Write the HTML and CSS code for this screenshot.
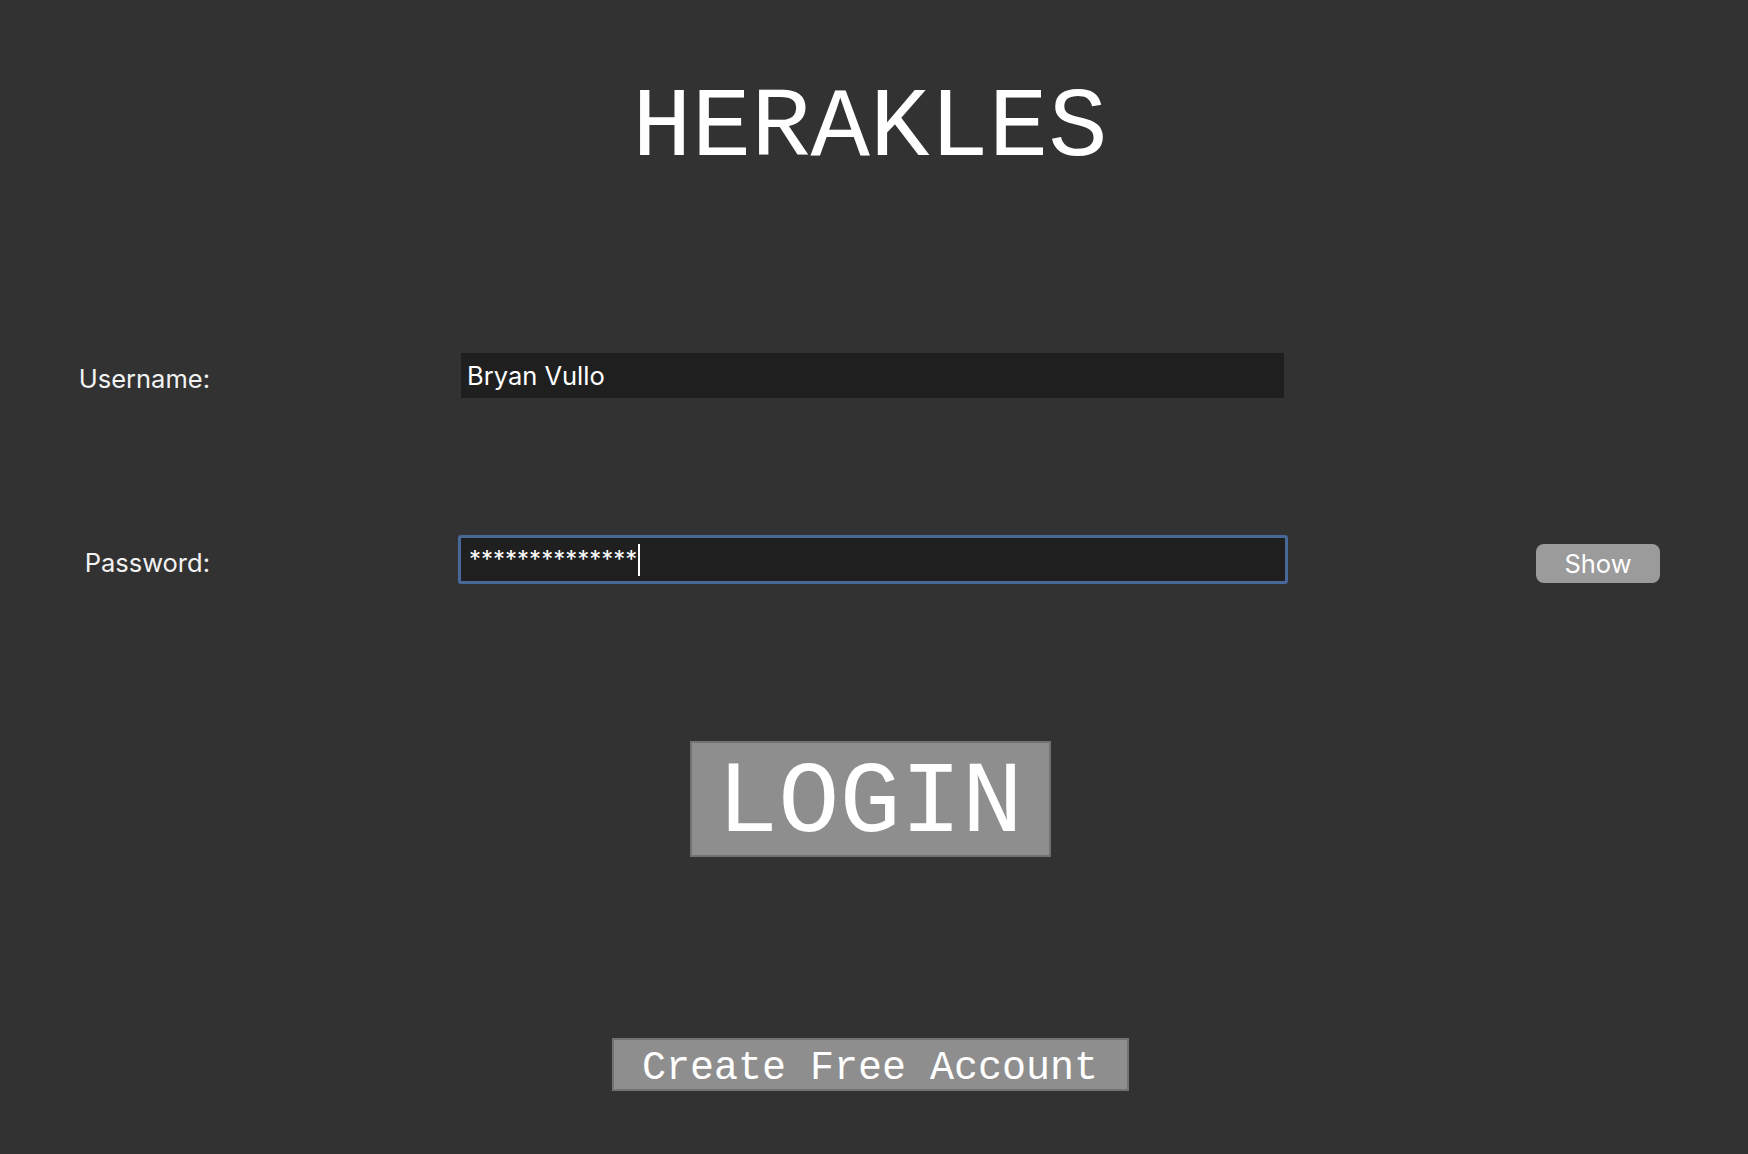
FILE: index.html
```html
<!DOCTYPE html>
<html>
<head>
<meta charset="utf-8">
<title>Herakles</title>
<link rel="stylesheet" href="styles.css">
</head>
<body>
<main class="page">
  <h1 class="title">HERAKLES</h1>
  <div class="form">
    <div class="row row-user">
      <label class="label">Username:</label>
      <div class="field">Bryan Vullo</div>
      <div class="aside"></div>
    </div>
    <div class="row row-pass">
      <label class="label">Password:</label>
      <div class="field field-focus"><span>**************</span><span class="caret"></span></div>
      <div class="aside"><button class="show">Show</button></div>
    </div>
  </div>
  <button class="login">LOGIN</button>
  <button class="create">Create Free Account</button>
</main>
</body>
</html>
```
FILE: styles.css
```css
html, body {
  margin: 0;
  padding: 0;
  background: #323232;
}
.page {
  width: 1748px;
  height: 1154px;
  display: flex;
  flex-direction: column;
  align-items: center;
  box-sizing: border-box;
  padding-top: 79px;
  padding-right: 8px;
}
.title {
  margin: 0;
  font-family: "Liberation Mono", monospace;
  font-weight: normal;
  font-size: 99px;
  line-height: 100px;
  color: #ffffff;
}
.form {
  width: 100%;
  margin-top: 174px;
  display: flex;
  flex-direction: column;
  gap: 137px;
}
.row {
  display: grid;
  grid-template-columns: 458px 830px 1fr;
  align-items: center;
}
.label {
  font-family: "Inter", "Noto Sans", sans-serif;
  font-size: 25.5px;
  color: #f2f2f2;
  justify-self: end;
  margin-right: 248px;
  margin-top: 6px;
}
.field {
  height: 45px;
  margin: 0 4px 0 3px;
  background: #1f1f1f;
  box-sizing: border-box;
  padding-left: 6px;
  display: flex;
  align-items: center;
  font-family: "Inter", "Noto Sans", sans-serif;
  font-size: 25.5px;
  color: #ffffff;
}
.field-focus {
  margin: 0;
  height: 49px;
  border: 3px solid #48689a;
  border-radius: 3px;
  padding-left: 8px;
  font-size: 24px;
}
.caret {
  display: inline-block;
  width: 2px;
  height: 32px;
  background: #ffffff;
  margin-left: 1px;
}
.aside {
  display: flex;
  justify-content: flex-end;
  padding-right: 80px;
}
.show {
  width: 124px;
  height: 39px;
  margin-top: 7px;
  border: none;
  border-radius: 8px;
  background: #9b9b9b;
  color: #ffffff;
  font-family: "Inter", "Noto Sans", sans-serif;
  font-size: 25.5px;
  padding: 0;
}
.login {
  margin-top: 157px;
  width: 361px;
  height: 116px;
  background: #8e8e8e;
  border: 2px solid #727272;
  color: #ffffff;
  font-family: "Liberation Mono", monospace;
  font-size: 102px;
  line-height: 100px;
  padding: 10px 0 0 0;
}
.create {
  margin-top: 181px;
  width: 517px;
  height: 53px;
  background: #8e8e8e;
  border: 2px solid #727272;
  color: #ffffff;
  font-family: "Liberation Mono", monospace;
  font-size: 40px;
  line-height: 40px;
  padding: 8px 0 0 0;
}
```
